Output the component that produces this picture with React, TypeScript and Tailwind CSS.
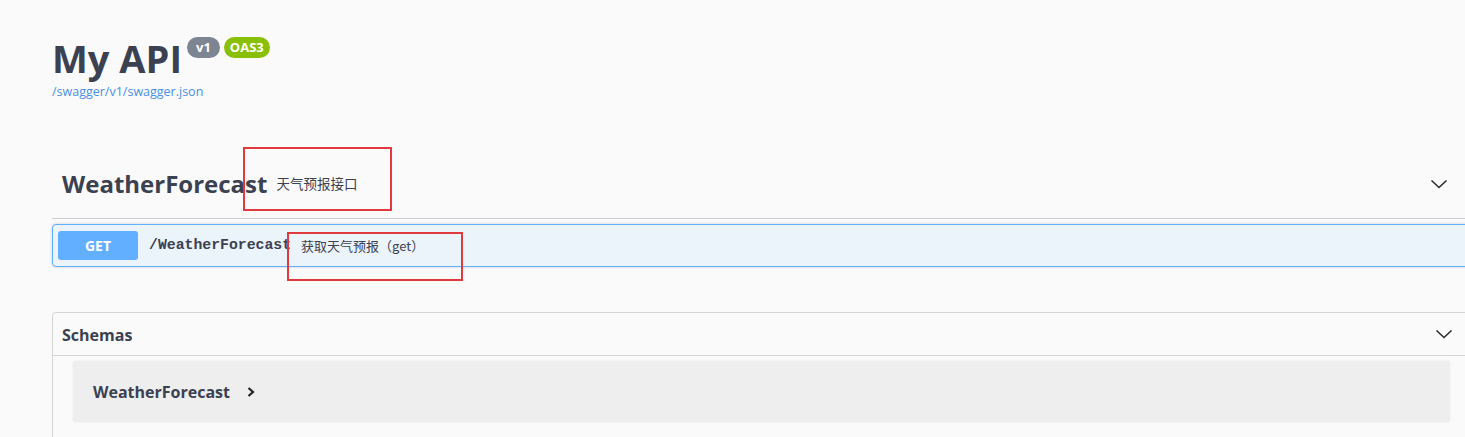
import React from 'react';

// Swagger UI page: title block, one tag with a GET operation, and a schemas panel.
// The red rectangles are annotation boxes drawn on top of the screenshot.

const SANS = "font-['Open_Sans','Noto_Sans_CJK_SC',sans-serif]";
const CJK = "font-['Noto_Sans_CJK_SC','Open_Sans',sans-serif]";

function ChevronDown({ className = '' }: { className?: string }) {
  return (
    <svg className={className} width="20" height="20" viewBox="0 0 20 20" fill="none">
      <path d="M2.5 6.5 L10 13.5 L17.5 6.5" stroke="#2b2b2b" strokeWidth="1.6" />
    </svg>
  );
}

function ChevronRight() {
  return (
    <svg width="10" height="12" viewBox="0 0 10 12" fill="none">
      <path d="M2.5 2 L7 6 L2.5 10" stroke="#222" strokeWidth="2.2" />
    </svg>
  );
}

export default function App() {
  return (
    <div className={`relative w-[1465px] h-[437px] overflow-hidden bg-[#fafafa] ${SANS}`}>
      <div className="w-[1480px] pl-[52px]">
        {/* ── Info ─────────────────────────────── */}
        <div className="pt-[30px]">
          <div className="flex items-start">
            <h1 className="text-[38px] leading-[56px] font-bold text-[#3b4151]">My API</h1>
            <div className="flex gap-[4px] mt-[7px] ml-[5px]">
              <span className="h-[21px] px-[9px] rounded-full bg-[#7d8492] text-white text-[13px] font-bold leading-[21px]">v1</span>
              <span className="h-[21px] px-[6px] rounded-full bg-[#89bf04] text-white text-[13px] font-bold leading-[21px]">OAS3</span>
            </div>
          </div>
          <a className="block text-[12.5px] leading-[16px] text-[#4990e2] mt-[-2px]">/swagger/v1/swagger.json</a>
        </div>

        {/* ── Tag ──────────────────────────────── */}
        <div className="mt-[49px]">
          <div className="flex items-center h-[70px] pl-[10px] pr-[31px] border-b border-[#c9ccd2]">
            <span className="text-[24px] font-bold text-[#3b4151]">WeatherForecast</span>
            <span className={`ml-[9px] text-[13.5px] text-[#3b4151] ${CJK}`}>天气预报接口</span>
            <ChevronDown className="ml-auto" />
          </div>
          <div className="mt-[5px] flex items-center h-[43px] border border-[#61affe] bg-[#ebf3fb] rounded-[4px] px-[5px] shadow-[0_0_3px_rgba(0,0,0,0.19)]">
            <span className="w-[80px] h-[29px] rounded-[3px] bg-[#61affe] text-white text-[14px] font-bold leading-[29px] text-center">GET</span>
            <span className="ml-[11px] text-[14.8px] font-bold text-[#3b4151] font-['Liberation_Mono',monospace]">/WeatherForecast</span>
            <span className={`ml-[10px] text-[13px] text-[#3b4151] ${CJK}`}>获取天气预报（get）</span>
          </div>
        </div>

        {/* ── Schemas ──────────────────────────── */}
        <div className="mt-[45px] border border-[#d5d5d5] rounded-[4px] h-[140px]">
          <div className="flex items-center h-[43px] pl-[9px] pr-[25px] border-b border-[#d5d5d5]">
            <span className="text-[16px] font-bold text-[#3b4151] mt-[1px]">Schemas</span>
            <ChevronDown className="ml-auto" />
          </div>
          <div className="pl-[20px] pr-[28px] pt-[5px]">
            <div className="flex items-center gap-[16px] h-[61px] w-[1377px] rounded-[4px] bg-[#eeeeee] px-[20px] shadow-[0_0_2px_rgba(0,0,0,0.1)]">
              <span className="text-[16px] font-bold text-[#3b4151]">WeatherForecast</span>
              <ChevronRight />
            </div>
          </div>
        </div>
      </div>

      {/* annotation boxes */}
      <div className="absolute left-[243px] top-[147px] w-[149px] h-[64px] border-2 border-[#e0393e]" />
      <div className="absolute left-[287px] top-[232px] w-[176px] h-[49px] border-2 border-[#e0393e]" />
    </div>
  );
}
